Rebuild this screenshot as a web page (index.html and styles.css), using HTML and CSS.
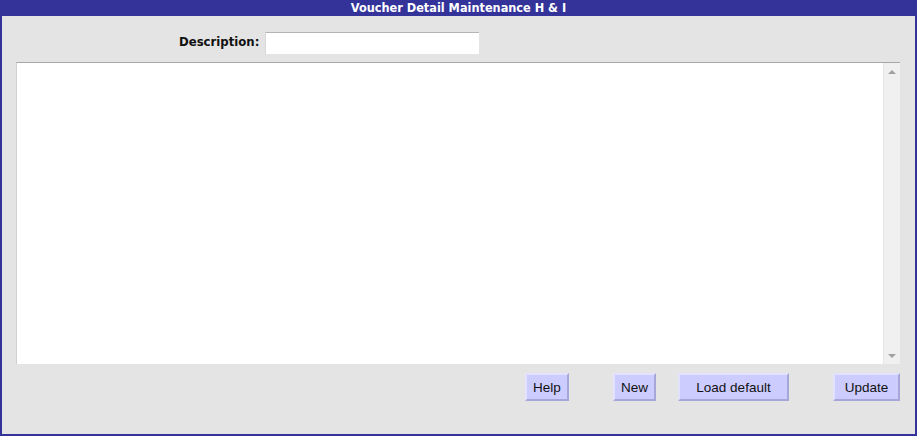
FILE: index.html
```html
<!DOCTYPE html>
<html>
<head>
<meta charset="utf-8">
<link rel="stylesheet" href="styles.css">
</head>
<body>
<div class="window">
  <div class="titlebar">Voucher Detail Maintenance H &amp; I</div>
  <div class="content">
    <div class="desc-row">
      <label class="desc-label" for="desc">Description:</label>
      <input class="desc-input" id="desc" type="text">
    </div>
    <div class="listbox">
      <div class="list-body"></div>
      <div class="scrollbar">
        <span class="arrow arrow-up"></span>
        <span class="arrow arrow-down"></span>
      </div>
    </div>
    <div class="button-row">
      <button class="btn btn-help">Help</button>
      <button class="btn btn-new">New</button>
      <button class="btn btn-load">Load default</button>
      <button class="btn btn-update">Update</button>
    </div>
  </div>
</div>
</body>
</html>
```
FILE: styles.css
```css
html, body {
  margin: 0;
  padding: 0;
  background: #ffffff;
}

.window {
  width: 917px;
  height: 436px;
  box-sizing: border-box;
  background: #333399;
  padding: 0 2px 2px 2px;
  display: flex;
  flex-direction: column;
}

.titlebar {
  height: 16px;
  line-height: 16px;
  text-align: center;
  color: #ffffff;
  font-family: "DejaVu Sans Condensed", "DejaVu Sans", sans-serif;
  font-stretch: condensed;
  font-weight: bold;
  font-size: 12.6px;
}

.content {
  flex: 1;
  background: #e4e4e4;
  display: flex;
  flex-direction: column;
}

.desc-row {
  display: flex;
  align-items: center;
  margin-top: 16px;
  margin-bottom: 8px;
  padding-left: 177px;
  height: 22px;
  gap: 6px;
}

.desc-label {
  font-family: "DejaVu Sans Condensed", "DejaVu Sans", sans-serif;
  font-stretch: condensed;
  font-weight: bold;
  font-size: 13px;
  color: #111111;
  margin-top: -3px;
}

.desc-input {
  width: 214px;
  height: 22px;
  box-sizing: border-box;
  margin: 0;
  padding: 0 3px;
  background: #ffffff;
  border: none;
  border-top: 1px solid #b4b4b4;
  border-left: 1px solid #d8d8d8;
  outline: none;
  font-family: "Liberation Sans", Arial, sans-serif;
  font-size: 13px;
}

.listbox {
  margin: 0 15px 0 14px;
  height: 302px;
  box-sizing: border-box;
  border-top: 1px solid #a8a8a8;
  border-left: 1px solid #d0d0d0;
  display: flex;
  background: #ffffff;
}

.list-body {
  flex: 1;
}

.scrollbar {
  width: 16px;
  background: #f0f0f0;
  border-left: 1px solid #e6e6e6;
  display: flex;
  flex-direction: column;
  justify-content: space-between;
  align-items: center;
  padding: 7px 0 6px 0;
}

.arrow {
  width: 0;
  height: 0;
  border-left: 4px solid transparent;
  border-right: 4px solid transparent;
}

.arrow-up {
  border-bottom: 4px solid #a0a0a0;
}

.arrow-down {
  border-top: 4px solid #a0a0a0;
}

.button-row {
  display: flex;
  margin-top: 9px;
  padding-left: 523px;
  height: 28px;
}

.btn {
  height: 28px;
  box-sizing: border-box;
  margin: 0;
  padding: 0;
  background: #ccccff;
  border: 2px solid;
  border-color: #e2e2ff #a6a6d8 #a6a6d8 #e2e2ff;
  font-family: "Liberation Sans", Arial, sans-serif;
  font-size: 13.5px;
  color: #111111;
}

.btn-help { width: 44px; }
.btn-new { width: 43px; margin-left: 44px; }
.btn-load { width: 111px; margin-left: 22px; }
.btn-update { width: 67px; margin-left: 44px; }
```
